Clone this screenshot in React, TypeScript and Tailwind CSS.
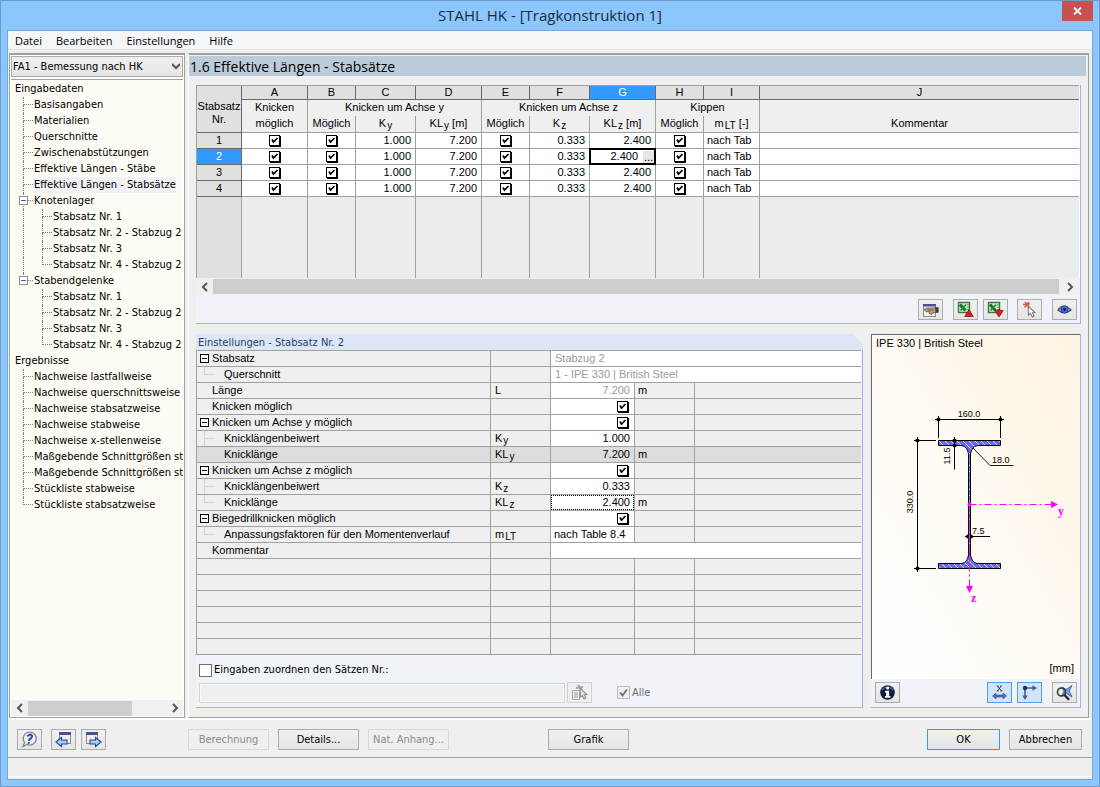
import React from "react";

const TAHOMA = "font-['DejaVu_Sans_Condensed','DejaVu_Sans',sans-serif]";
const SEGOE = "font-['Open_Sans','Noto_Sans',sans-serif]";

/* ---------- small shared pieces ---------- */

function GridCheck({ label }: { label: string }) {
  return (
    <span className="inline-grid h-[12px] w-[12px] align-top">
      <input
        type="checkbox"
        defaultChecked
        aria-label={label}
        className="peer m-0 h-[11px] w-[11px] appearance-none border border-black bg-white shadow-[1px_1px_0_#000] [grid-area:1/1]"
      />
      <svg viewBox="0 0 11 11" className="pointer-events-none invisible h-[11px] w-[11px] peer-checked:visible [grid-area:1/1]">
        <path d="M3 4.5 L4.5 7.2 L8.5 3" fill="none" stroke="#000" strokeWidth="1.7" />
      </svg>
    </span>
  );
}

function Index({ children }: { children: React.ReactNode }) {
  return <sub className="-bottom-[2px] ml-px text-[10px]">{children}</sub>;
}

function Chevron({ dir }: { dir: "left" | "right" | "down" }) {
  const d = { left: "M6 1 L2 5 L6 9", right: "M2 1 L6 5 L2 9", down: "M0 3 L4 7 L8 3" }[dir];
  return (
    <svg viewBox="0 0 8 10" className="h-[10px] w-[8px]">
      <path d={d} fill="none" stroke="#555" strokeWidth="2" />
    </svg>
  );
}

function IconButton({
  label,
  tone = "plain",
  children,
}: {
  label: string;
  tone?: "plain" | "active" | "off";
  children: React.ReactNode;
}) {
  const tones = {
    plain: "border-[#acacac] bg-linear-to-b from-[#f0f0f0] to-[#e5e5e5]",
    active: "border-[#569de5] bg-[#cfe5fb]",
    off: "border-[#d0d0d0] bg-[#efefef]",
  };
  return (
    <button
      type="button"
      aria-label={label}
      disabled={tone === "off"}
      className={`flex h-[21px] w-[25px] shrink-0 items-center justify-center border ${tones[tone]}`}
    >
      {children}
    </button>
  );
}

function PushButton({
  children,
  disabled,
  primary,
  width = "w-[81px]",
}: {
  children: React.ReactNode;
  disabled?: boolean;
  primary?: boolean;
  width?: string;
}) {
  const look = disabled
    ? "border-[#d9d9d9] bg-[#efefef] text-[#8a8a8a]"
    : primary
      ? "border-[#3399ff] bg-linear-to-b from-[#f0f0f0] to-[#e5e5e5]"
      : "border-[#acacac] bg-linear-to-b from-[#f0f0f0] to-[#e5e5e5]";
  return (
    <button type="button" disabled={disabled} className={`h-[21px] ${width} shrink-0 border pt-[2px] text-center whitespace-nowrap ${look}`}>
      {children}
    </button>
  );
}

/* ---------- icons ---------- */

const icon = "h-[17px] w-[17px]";

const ExcelIcon = ({ up }: { up: boolean }) => (
  <svg viewBox="0 0 17 17" className={icon}>
    <rect x="1.5" y="1.5" width="11" height="10" fill="#cfe6cf" stroke="#2f7d3a" strokeWidth="1.4" />
    <path d="M3 3.5 L8.5 9.5" stroke="#1a6b28" strokeWidth="2.8" />
    <path d="M9 3.5 L3.5 9.5" stroke="#2f8a3d" strokeWidth="1.8" />
    <path d="M10 3.8 H12 M10 6.2 H12 M10 8.6 H12" stroke="#57a560" />
    {up ? (
      <path d="M12 8.5 L16.3 15.5 H7.7 Z" fill="#e01b1b" stroke="#8d0a0a" strokeWidth="0.7" />
    ) : (
      <path d="M7.7 9.5 H10 Q12 7.5 14 9.5 H16.3 L12 16 Z" fill="#e01b1b" stroke="#8d0a0a" strokeWidth="0.7" />
    )}
  </svg>
);

const DialogHandIcon = () => (
  <svg viewBox="0 0 17 17" className={icon}>
    <rect x="1.5" y="3.5" width="12" height="12" fill="#f2f2f2" stroke="#8b8b8b" />
    <rect x="1" y="3" width="13" height="2.5" fill="#46538c" />
    <path d="M2 8.5 L5 7 H9 L16 6.5 V11.5 H12 L9.5 13.5 L7 12.5 L7.5 10.5 L4 10.8 Z" fill="#b9977a" stroke="#5f4a3a" strokeWidth="0.7" />
    <path d="M13 6.5 H16.5 V11.5 H13.5 Z" fill="#3a3f55" />
    <path d="M6 9 H11" stroke="#6b5444" strokeWidth="0.8" />
  </svg>
);

const PickIcon = () => (
  <svg viewBox="0 0 17 17" className={icon}>
    <path d="M2 3.5 L9 3 M3.5 6.5 L8 1 M4 1 L8 6" stroke="#d95757" strokeWidth="1.6" />
    <path d="M7 5 L7.5 14 L9.5 12.3 L11.3 16 L13 15 L11.5 11.7 L14 11.5 Z" fill="#fff" stroke="#7a7a7a" strokeWidth="1.1" />
  </svg>
);

const EyeIcon = () => (
  <svg viewBox="0 0 17 17" className={icon}>
    <path d="M2 9 Q8 2.5 15 9 Q8 14.5 2 9 Z" fill="#e8ecf7" stroke="#3a3f58" strokeWidth="1.2" />
    <path d="M2 8 Q8 1.5 15 8.5" fill="none" stroke="#6b7080" />
    <circle cx="8.5" cy="8.5" r="3.7" fill="#3d6ae0" stroke="#1b2f80" strokeWidth="0.8" />
    <circle cx="8.5" cy="8.5" r="1.4" fill="#0a0f30" />
  </svg>
);

const InfoIcon = () => (
  <svg viewBox="0 0 17 17" className={icon}>
    <circle cx="8.5" cy="8.5" r="7.3" fill="#101c40" />
    <path d="M3 6 Q8.5 -0.5 14 6" fill="none" stroke="#4a5f9a" strokeWidth="1.3" />
    <rect x="7.3" y="3" width="2.8" height="2.4" fill="#fff" />
    <path d="M6 6.8 H10.1 V12 H11.4 V13.8 H6 V12 H7.2 V8.5 H6 Z" fill="#fff" />
  </svg>
);

const DimensionXIcon = () => (
  <svg viewBox="0 0 17 17" className={icon}>
    <path d="M6.5 2 L10.5 7 M10.2 2 L6.5 7" stroke="#222" strokeWidth="0.9" />
    <path d="M5.5 2 H7.5 M9.3 2 H11 M5.5 7 H7.5 M9.3 7 H11.3" stroke="#222" strokeWidth="0.7" />
    <path d="M1.5 12 L5 9 V11 H12 V9 L15.5 12 L12 15 V13 H5 V15 Z" fill="#4a6fb8" stroke="#2f4f8c" strokeWidth="0.6" />
  </svg>
);

const AxesIcon = () => (
  <svg viewBox="0 0 17 17" className={icon}>
    <path d="M4 4 H12 M4 4 V12" stroke="#4a5f8c" strokeWidth="1.6" />
    <path d="M11.5 1.3 L16 4 L11.5 6.7 Z M1.3 11.5 L4 16 L6.7 11.5 Z" fill="#41609e" />
    <circle cx="4" cy="4" r="2.2" fill="#1f2f58" />
  </svg>
);

const ZoomResetIcon = () => (
  <svg viewBox="0 0 17 17" className={icon}>
    <path d="M6 3 L10 5.5 L16 1.5 L13.2 7 L16 13 L10.5 9.5 L5.5 12 L8 7.5 Z" fill="#7fa5ea" stroke="#2c4d96" strokeWidth="0.8" />
    <circle cx="5.5" cy="8" r="4" fill="none" stroke="#333" strokeWidth="1.6" />
    <path d="M8.3 10.8 L13 15.8" stroke="#222" strokeWidth="2.4" />
  </svg>
);

const HelpIcon = () => (
  <svg viewBox="0 0 17 17" className={icon}>
    <path d="M8.8 1.2 A6.4 6.4 0 1 1 6.2 13.4 L2 15.5 L3.6 11.5 A6.4 6.4 0 0 1 8.8 1.2 Z" fill="#eef0f4" stroke="#85888f" strokeWidth="1.3" />
    <path d="M6.3 5.4 Q8.8 2.2 10.9 4.6 Q11.6 6.4 8.5 8.4 L8 10" fill="none" stroke="#27489b" strokeWidth="1.9" />
    <circle cx="7.7" cy="12" r="1.1" fill="#27489b" />
  </svg>
);

const WindowArrowIcon = ({ back }: { back: boolean }) => (
  <svg viewBox="0 0 17 17" className={icon}>
    <rect x={back ? 4.5 : 1.5} y="1.5" width="11" height="11" fill="#ededed" stroke="#8a8a8a" />
    <rect x={back ? 4 : 1} y="1" width="12" height="3" fill="#46538c" />
    {back ? (
      <path d="M1 11 L6.5 6.5 V9 H12 V13 H6.5 V15.5 Z" fill="#a9ccfa" stroke="#23499c" strokeWidth="1.1" />
    ) : (
      <path d="M16 11 L10.5 6.5 V9 H5 V13 H10.5 V15.5 Z" fill="#a9ccfa" stroke="#23499c" strokeWidth="1.1" />
    )}
  </svg>
);

const PickListIcon = () => (
  <svg viewBox="0 0 17 17" className={icon}>
    <path d="M1.5 6.5 H8.5 V15.5 H1.5 Z" fill="#f4f4f4" stroke="#a5a5a5" />
    <path d="M3 9 H7 M3 11 H7 M3 13 H7" stroke="#999" />
    <path d="M5 4 L12 3 M7 1 L11 6" stroke="#a5a5a5" strokeWidth="2" />
    <path d="M9 4 L9.5 13 L11.3 11.5 L13 15 L14.7 14 L13.2 10.8 L15.8 10.5 Z" fill="#e6e6e6" stroke="#8c8c8c" strokeWidth="1.1" />
  </svg>
);

/* ---------- navigation tree ---------- */

type Node = { text: string; level: 0 | 1 | 2; last?: boolean; box?: boolean; trunk?: boolean; current?: boolean };

const nodes: Node[] = [
  { text: "Eingabedaten", level: 0 },
  { text: "Basisangaben", level: 1 },
  { text: "Materialien", level: 1 },
  { text: "Querschnitte", level: 1 },
  { text: "Zwischenabstützungen", level: 1 },
  { text: "Effektive Längen - Stäbe", level: 1 },
  { text: "Effektive Längen - Stabsätze", level: 1, current: true },
  { text: "Knotenlager", level: 1, box: true },
  { text: "Stabsatz Nr. 1", level: 2, trunk: true },
  { text: "Stabsatz Nr. 2 - Stabzug 2", level: 2, trunk: true },
  { text: "Stabsatz Nr. 3", level: 2, trunk: true },
  { text: "Stabsatz Nr. 4 - Stabzug 2", level: 2, trunk: true, last: true },
  { text: "Stabendgelenke", level: 1, box: true, last: true },
  { text: "Stabsatz Nr. 1", level: 2 },
  { text: "Stabsatz Nr. 2 - Stabzug 2", level: 2 },
  { text: "Stabsatz Nr. 3", level: 2 },
  { text: "Stabsatz Nr. 4 - Stabzug 2", level: 2, last: true },
  { text: "Ergebnisse", level: 0 },
  { text: "Nachweise lastfallweise", level: 1 },
  { text: "Nachweise querschnittsweise", level: 1 },
  { text: "Nachweise stabsatzweise", level: 1 },
  { text: "Nachweise stabweise", level: 1 },
  { text: "Nachweise x-stellenweise", level: 1 },
  { text: "Maßgebende Schnittgrößen sta", level: 1 },
  { text: "Maßgebende Schnittgrößen sta", level: 1 },
  { text: "Stückliste stabweise", level: 1 },
  { text: "Stückliste stabsatzweise", level: 1, last: true },
];

function TreeRow({ node }: { node: Node }) {
  return (
    <li className="flex h-4 items-center pl-[3px] whitespace-nowrap">
      {node.level === 2 && (
        <span className={`ml-[9px] h-4 w-[19px] shrink-0 border-dotted border-[#7d7d7d] ${node.trunk ? "border-l" : ""}`} />
      )}
      {node.level > 0 && (
        <span className={`relative flex w-[10px] shrink-0 flex-col ${node.level === 1 ? "ml-[9px]" : ""}`}>
          <span className="h-2 border-b border-l border-dotted border-[#7d7d7d]" />
          <span className={`h-2 border-dotted border-[#7d7d7d] ${node.last ? "" : "border-l"}`} />
          {node.box && (
            <button
              type="button"
              aria-label={`${node.text} zuklappen`}
              className="absolute top-[3px] -left-1 flex h-[9px] w-[9px] items-center justify-center border border-[#919191] bg-white"
            >
              <span className="h-px w-[5px] bg-[#3f5fae]" />
            </button>
          )}
        </span>
      )}
      <a href="#" className={`h-4 leading-4 ${node.current ? "bg-[#f1f1f4]" : ""} ${node.level > 0 ? "pl-px" : "pl-px"}`}>
        {node.text}
      </a>
    </li>
  );
}

function Sidebar() {
  return (
    <aside className="flex w-[176px] shrink-0 flex-col border border-t-2 border-[#a0a0a0] bg-white px-px pt-px">
      <div className="relative">
        <select
          aria-label="Bemessungsfall"
          className="block h-[21px] w-full appearance-none border border-[#acacac] bg-linear-to-b from-[#f0f0f0] to-[#e5e5e5] pt-[2px] pr-4 pl-px"
        >
          <option>FA1 - Bemessung nach HK</option>
        </select>
        <span className="pointer-events-none absolute top-[5px] right-[3px] flex">
          <Chevron dir="down" />
        </span>
      </div>
      <ul className="mt-[2px] flex-1 overflow-hidden border-t border-[#a0a0a0] bg-[#fcfbf4] pt-px">
        {nodes.map((n, i) => (
          <TreeRow key={i} node={n} />
        ))}
      </ul>
      <div className="mb-px flex h-[16px] items-center bg-[#f0f0f0]">
        <span className="flex w-[17px] justify-center">
          <Chevron dir="left" />
        </span>
        <span className="h-[15px] w-[104px] bg-[#cdcdcd]" />
        <span className="ml-auto flex w-[17px] justify-center">
          <Chevron dir="right" />
        </span>
      </div>
    </aside>
  );
}

/* ---------- upper grid ---------- */

const letters = ["A", "B", "C", "D", "E", "F", "G", "H", "I", "J"];
const gridRows = [1, 2, 3, 4];

function CheckCell({ label }: { label: string }) {
  return (
    <td className="h-[16px] border-r border-b border-[#a0a0a0] bg-white p-0">
      <div className="flex h-[15px] items-end justify-center pb-px">
        <GridCheck label={label} />
      </div>
    </td>
  );
}

function LengthsGrid() {
  const sub = "border-r border-b border-[#a0a0a0] h-[17px] p-0 pb-[2px] font-normal";
  const group = "border-r border-[#a0a0a0] h-[16px] p-0 pb-[2px] font-normal";
  const cell = "border-r border-b border-[#a0a0a0] bg-white h-[16px] p-0 leading-[15px]";
  return (
    <section className="flex flex-col border-r border-b border-[#aaaaee] bg-[#f0f4f9]">
      <div className="bg-white pr-px">
        <table className="w-full table-fixed border-separate border-spacing-0 border-t border-l border-[#a0a0a0] bg-[#efefef] text-center font-['Liberation_Sans',Arial,sans-serif] leading-[13px]">
          <colgroup>
            <col className="w-[45px]" />
            <col className="w-[66px]" />
            <col className="w-[48px]" />
            <col className="w-[60px]" />
            <col className="w-[66px]" />
            <col className="w-[48px]" />
            <col className="w-[60px]" />
            <col className="w-[66px]" />
            <col className="w-[48px]" />
            <col className="w-[56px]" />
            <col />
          </colgroup>
          <thead>
            <tr>
              <th rowSpan={3} className="border-r border-b border-[#696969] bg-[#e0e0e0] p-0 pt-[14px] align-top font-normal">
                Stabsatz
                <br />
                Nr.
              </th>
              {letters.map((l) => (
                <th
                  key={l}
                  className={`h-[14px] border-r border-b border-[#696969] p-0 font-normal ${
                    l === "G" ? "bg-[#3399ff] text-white" : "bg-[#e0e0e0]"
                  } ${l === "J" ? "border-r-0" : ""}`}
                >
                  {l}
                </th>
              ))}
            </tr>
            <tr>
              <th className={group}>Knicken</th>
              <th className={group} colSpan={3}>
                Knicken um Achse y
              </th>
              <th className={group} colSpan={3}>
                Knicken um Achse z
              </th>
              <th className={group} colSpan={2}>
                Kippen
              </th>
              <th className="p-0" />
            </tr>
            <tr>
              <th className={sub}>möglich</th>
              <th className={sub}>Möglich</th>
              <th className={sub}>
                K<Index>y</Index>
              </th>
              <th className={sub}>
                KL<Index>y</Index> [m]
              </th>
              <th className={sub}>Möglich</th>
              <th className={sub}>
                K<Index>z</Index>
              </th>
              <th className={sub}>
                KL<Index>z</Index> [m]
              </th>
              <th className={sub}>Möglich</th>
              <th className={sub}>
                m<Index>LT</Index> [-]
              </th>
              <th className="border-b border-[#a0a0a0] p-0 pb-[2px] font-normal">Kommentar</th>
            </tr>
          </thead>
          <tbody>
            {gridRows.map((n) => (
              <tr key={n}>
                <th
                  className={`h-[16px] border-r border-b border-[#696969] p-0 leading-[15px] font-normal ${
                    n === 2 ? "bg-[#3399ff] text-white" : "bg-[#e0e0e0]"
                  }`}
                >
                  {n}
                </th>
                <CheckCell label={`Knicken möglich ${n}`} />
                <CheckCell label={`Knicken um y möglich ${n}`} />
                <td className={`${cell} pr-1 text-right`}>1.000</td>
                <td className={`${cell} pr-1 text-right`}>7.200</td>
                <CheckCell label={`Knicken um z möglich ${n}`} />
                <td className={`${cell} pr-1 text-right`}>0.333</td>
                {n === 2 ? (
                  <td className={cell}>
                    <div className="flex h-[15px] items-center justify-end outline-2 -outline-offset-1 outline-black">
                      2.400
                      <button type="button" aria-label="Wert auswählen" className="mr-px ml-[5px] h-[12px] w-[11px] bg-[#e4e4e4] leading-[8px]">
                        ...
                      </button>
                    </div>
                  </td>
                ) : (
                  <td className={`${cell} pr-1 text-right`}>2.400</td>
                )}
                <CheckCell label={`Kippen möglich ${n}`} />
                <td className={`${cell} pl-[3px] text-left`}>nach Tab</td>
                <td className={`${cell} border-r-0`} />
              </tr>
            ))}
            <tr>
              <td className="h-[81px] border-r border-[#a0a0a0] bg-[#e0e0e0]" />
              {letters.map((l) => (
                <td key={l} className={`bg-[#e9edee] ${l === "J" ? "" : "border-r border-[#a0a0a0]"}`} />
              ))}
            </tr>
          </tbody>
        </table>
      </div>
      <div className="flex h-[17px] items-center bg-[#f0f0f0]">
        <span className="flex w-[17px] justify-center">
          <Chevron dir="left" />
        </span>
        <span className="h-[15px] flex-1 bg-[#cdcdcd]" />
        <span className="flex w-[21px] justify-center">
          <Chevron dir="right" />
        </span>
      </div>
      <div className="flex h-[28px] items-center justify-end pr-[3px]">
        <IconButton label="Dialog bearbeiten">
          <DialogHandIcon />
        </IconButton>
        <span className="w-[10px]" />
        <IconButton label="Excel-Export">
          <ExcelIcon up />
        </IconButton>
        <span className="w-[5px]" />
        <IconButton label="Excel-Import">
          <ExcelIcon up={false} />
        </IconButton>
        <span className="w-[9px]" />
        <IconButton label="Stabsatz wählen">
          <PickIcon />
        </IconButton>
        <span className="w-[10px]" />
        <IconButton label="Ansicht">
          <EyeIcon />
        </IconButton>
      </div>
    </section>
  );
}

/* ---------- settings grid ---------- */

type Setting = {
  text: string;
  box?: boolean;
  child?: "mid" | "end";
  base?: string;
  index?: string;
  value?: string;
  check?: boolean;
  unit?: string;
  muted?: boolean;
  wide?: boolean;
  shaded?: boolean;
  focus?: boolean;
  left?: boolean;
};

const settings: Setting[] = [
  { text: "Stabsatz", box: true, value: "Stabzug 2", wide: true, muted: true },
  { text: "Querschnitt", child: "end", value: "1 - IPE 330 | British Steel", wide: true, muted: true },
  { text: "Länge", base: "L", value: "7.200", unit: "m", muted: true },
  { text: "Knicken möglich", check: true },
  { text: "Knicken um Achse y möglich", box: true, check: true },
  { text: "Knicklängenbeiwert", child: "mid", base: "K", index: "y", value: "1.000" },
  { text: "Knicklänge", child: "end", base: "KL", index: "y", value: "7.200", unit: "m", shaded: true },
  { text: "Knicken um Achse z möglich", box: true, check: true },
  { text: "Knicklängenbeiwert", child: "mid", base: "K", index: "z", value: "0.333" },
  { text: "Knicklänge", child: "end", base: "KL", index: "z", value: "2.400", unit: "m", focus: true },
  { text: "Biegedrillknicken möglich", box: true, check: true },
  { text: "Anpassungsfaktoren für den Momentenverlauf", child: "end", base: "m", index: "LT", value: "nach Table 8.4", left: true },
  { text: "Kommentar", wide: true },
];

function SettingsPanel() {
  const line = "border-r border-b border-[#a0a0a0] h-[16px] p-0";
  const edge = "border-b border-[#a0a0a0] h-[16px] p-0";
  return (
    <section className="flex min-w-0 flex-1 flex-col">
      <h2 className="h-[16px] bg-[#dce6f4] pt-px pl-[2px] leading-[15px] text-[#1f3f6f] [clip-path:polygon(0_0,calc(100%-10px)_0,100%_10px,100%_100%,0_100%)]">
        Einstellungen - Stabsatz Nr. 2
      </h2>
      <div className="flex flex-1 flex-col border-r border-b border-[#aaaaee] bg-[#f0f4f9]">
        <div className="pr-px">
          <table className="w-full table-fixed border-separate border-spacing-0 border-t border-l border-[#a0a0a0] bg-[#efefef] font-['Liberation_Sans',Arial,sans-serif] leading-[15px]">
            <colgroup>
              <col />
              <col className="w-[60px]" />
              <col className="w-[84px]" />
              <col className="w-[60px]" />
              <col className="w-[166px]" />
            </colgroup>
            <tbody>
              {settings.map((s, i) => (
                <tr key={i} className={s.shaded ? "bg-[#dcdcdc]" : ""}>
                  <th className={`${line} text-left font-normal`}>
                    <div className="flex h-[15px] items-center">
                      {s.box ? (
                        <button
                          type="button"
                          aria-label={`${s.text} zuklappen`}
                          className="mr-[3px] ml-[3px] flex h-[9px] w-[9px] items-center justify-center border border-black bg-white"
                        >
                          <span className="h-px w-[5px] bg-black" />
                        </button>
                      ) : s.child ? (
                        <span className="mr-[9px] ml-[7px] flex h-[15px] w-[11px] flex-col">
                          <span className={`h-2 ${s.shaded ? "" : "border-b border-l border-[#d2d2d2]"}`} />
                          <span className={`h-[7px] border-[#d2d2d2] ${s.child === "mid" ? "border-l" : ""}`} />
                        </span>
                      ) : (
                        <span className="w-[15px]" />
                      )}
                      {s.text}
                    </div>
                  </th>
                  <td className={`${line} pl-1`}>
                    {s.base}
                    {s.index && <Index>{s.index}</Index>}
                  </td>
                  {s.wide ? (
                    <td colSpan={3} className={`${edge} bg-white pl-1 text-[#9a9a9a]`}>
                      {s.value}
                    </td>
                  ) : (
                    <>
                      <td className={`${line} ${s.shaded ? "" : "bg-white"} ${s.muted ? "text-[#9a9a9a]" : ""}`}>
                        <div
                          className={`flex h-[15px] items-center ${s.left ? "pl-[3px]" : s.check ? "justify-end pr-[5px]" : "justify-end pr-1"} ${
                            s.focus ? "outline-1 -outline-offset-1 outline-black outline-dotted" : ""
                          }`}
                        >
                          {s.check ? <GridCheck label={s.text} /> : s.value}
                        </div>
                      </td>
                      <td className={`${line} pl-[3px]`}>{s.unit}</td>
                      <td className={edge} />
                    </>
                  )}
                </tr>
              ))}
              {[0, 1, 2, 3, 4, 5].map((i) => (
                <tr key={i}>
                  <td className={line} />
                  <td className={line} />
                  <td className={line} />
                  <td className={line} />
                  <td className={edge} />
                </tr>
              ))}
            </tbody>
          </table>
        </div>
        <div className="flex flex-1 flex-col gap-[5px] pt-[9px] pb-[4px] pl-[3px]">
          <label className="flex h-[13px] items-center gap-[2px]">
            <input type="checkbox" className="m-0 h-[13px] w-[13px] appearance-none border border-[#707070] bg-white" />
            Eingaben zuordnen den Sätzen Nr.:
          </label>
          <div className="flex items-center">
            <input
              type="text"
              disabled
              aria-label="Sätze Nr."
              className="h-[20px] min-w-0 flex-1 border border-[#d0d3d8] bg-[#efefef] px-1 shadow-[inset_0_0_0_1px_#fafafa]"
            />
            <span className="w-[2px]" />
            <IconButton label="Sätze wählen" tone="off">
              <PickListIcon />
            </IconButton>
            <label className="ml-[25px] flex w-[245px] items-center gap-[2px] text-[#6d6d6d]">
              <span className="grid">
                <input
                  type="checkbox"
                  defaultChecked
                  disabled
                  className="m-0 h-[13px] w-[13px] appearance-none border border-[#bcbcbc] bg-[#efefef] [grid-area:1/1]"
                />
                <svg viewBox="0 0 13 13" className="pointer-events-none h-[13px] w-[13px] [grid-area:1/1]">
                  <path d="M3 6.5 L5.5 9.5 L10 3.5" fill="none" stroke="#6d6d6d" strokeWidth="1.8" />
                </svg>
              </span>
              <span className="pt-px">Alle</span>
            </label>
          </div>
        </div>
      </div>
    </section>
  );
}

/* ---------- section drawing ---------- */

const profile =
  "M938.5 440.5 H1000.5 V445.5 H977 Q971.5 447 970.5 454 V555 Q971.5 562 977 563.5 H1000.5 V568.5 H938.5 V563.5 H962 Q967.5 562 968.5 555 V454 Q967.5 447 962 445.5 H938.5 Z";

const ticks = [
  [938.5, 419.5],
  [1000.5, 419.5],
  [917.5, 440.5],
  [917.5, 568.5],
  [954.5, 440.5],
  [954.5, 445.5],
  [968, 536.5],
  [971, 536.5],
];

function SectionDrawing() {
  return (
    <svg viewBox="872 352 208 309" className="min-h-0 w-full flex-1" role="img" aria-label="Querschnitt IPE 330">
      <defs>
        <pattern id="hatch" width="6" height="6" patternUnits="userSpaceOnUse">
          <rect width="6" height="6" fill="#6666f8" />
          <path d="M-1 -1 L7 7 M-1 5 L1 7 M5 -1 L7 1" stroke="#d6d6ff" strokeWidth="1" />
        </pattern>
      </defs>
      <path d={profile} fill="url(#hatch)" stroke="#000" />
      <g stroke="#000" fill="none">
        <path d="M935 419.5 H1004 M938.5 416 V438 M1000.5 416 V438" />
        <path d="M917.5 437 V572 M914 440.5 H936 M914 568.5 H936" />
        <path d="M954.5 437 V469.5" />
        <path d="M965 536.5 H990" />
        <path d="M973 448 L990 465.5 H1013.5" strokeWidth="0.9" />
      </g>
      {ticks.map(([x, y]) => (
        <circle key={`${x}-${y}`} cx={x} cy={y} r="2" />
      ))}
      <g stroke="#f0f" fill="none">
        <path d="M969.5 504.5 H1051" strokeDasharray="7 3 2 3" />
        <path d="M969.5 504.5 V587" strokeDasharray="7 3 2 3" />
      </g>
      <path d="M1051 501 L1058 504.5 L1051 508 Z M966 586 H973 L969.5 593 Z" fill="#f0f" />
      <circle cx="969.5" cy="504.5" r="2" fill="#f0f" />
      <g className="font-['Liberation_Sans',Arial,sans-serif] text-[9px]">
        <text x="969" y="417" textAnchor="middle">160.0</text>
        <text x="992" y="463">18.0</text>
        <text x="972" y="534">7.5</text>
        <text transform="translate(913 502) rotate(-90)" textAnchor="middle">330.0</text>
        <text transform="translate(950 456) rotate(-90)" textAnchor="middle">11.5</text>
      </g>
      <g fill="#f0f" className="font-['Liberation_Serif',serif] text-[12px] font-bold">
        <text x="1058" y="515">y</text>
        <text x="971" y="602">z</text>
      </g>
    </svg>
  );
}

function SectionPanel() {
  return (
    <section className="flex w-[210px] shrink-0 flex-col border-r border-b border-[#aaaaee] bg-[#f0f4f9]">
      <div className="flex flex-1 flex-col border-t border-l border-[#696969] bg-linear-to-bl from-[#fcf4e0] via-[#fffaf2] to-white font-['Liberation_Sans',Arial,sans-serif]">
        <div className="h-[17px] pl-1 leading-[17px]">IPE 330 | British Steel</div>
        <SectionDrawing />
        <div className="h-[18px] pr-[6px] text-right leading-[15px]">[mm]</div>
      </div>
      <div className="flex h-[28px] items-center pr-[3px] pb-px pl-1">
        <IconButton label="Info">
          <InfoIcon />
        </IconButton>
        <span className="flex-1" />
        <IconButton label="Bemaßung" tone="active">
          <DimensionXIcon />
        </IconButton>
        <span className="w-[5px]" />
        <IconButton label="Achsen" tone="active">
          <AxesIcon />
        </IconButton>
        <span className="w-[10px]" />
        <IconButton label="Ansicht zurücksetzen">
          <ZoomResetIcon />
        </IconButton>
      </div>
    </section>
  );
}

/* ---------- window ---------- */

export default function App() {
  return (
    <div className={`flex min-h-screen flex-col border border-[#6c9bc7] bg-[#8cc6fe] px-[6px] pb-[6px] text-[11px] text-black ${TAHOMA}`}>
      <header className={`flex h-[29px] items-start ${SEGOE}`}>
        <span className="w-[31px]" />
        <h1 className="flex-1 text-center text-[15px] leading-[29px] text-[#1b2a3a]">STAHL HK - [Tragkonstruktion 1]</h1>
        <button type="button" aria-label="Schließen" className="flex h-[20px] w-[31px] items-center justify-center bg-[#c75050]">
          <svg viewBox="0 0 9 8" className="h-[8px] w-[9px]">
            <path d="M1 0.5 L8 7.5 M8 0.5 L1 7.5" stroke="#fff" strokeWidth="1.8" />
          </svg>
        </button>
      </header>

      <div className="flex flex-1 flex-col border border-[#76a7d6] bg-[#efefef]">
        <nav className={`flex h-[19px] items-center gap-[14px] border-b border-[#e6e6e6] bg-[#f5f6f7] pt-[2px] pl-[7px] text-[11px] ${SEGOE}`}>
          <button type="button">Datei</button>
          <button type="button">Bearbeiten</button>
          <button type="button">Einstellungen</button>
          <button type="button">Hilfe</button>
        </nav>

        <div className="flex flex-1 gap-[3px] border-b border-white pt-[3px] pr-[3px] pl-px">
          <Sidebar />
          <main className="flex min-w-0 flex-1 flex-col border border-t-2 border-[#a0a0a0] border-l-white pt-px">
            <h2 className={`mr-[2px] h-[20px] bg-[#bccbd9] pl-px text-[14px] leading-[22px] ${SEGOE}`}>1.6 Effektive Längen - Stabsätze</h2>
            <div className="flex flex-1 flex-col gap-[10px] px-[7px] pt-[9px] pb-[9px]">
              <LengthsGrid />
              <div className="flex flex-1 gap-2">
                <SettingsPanel />
                <SectionPanel />
              </div>
            </div>
          </main>
        </div>

        <footer>
          <div className="flex h-[38px] items-center border-t border-white px-[9px] pt-[2px]">
            <IconButton label="Hilfe">
              <HelpIcon />
            </IconButton>
            <span className="w-[9px]" />
            <IconButton label="Zurück">
              <WindowArrowIcon back />
            </IconButton>
            <span className="w-[5px]" />
            <IconButton label="Weiter">
              <WindowArrowIcon back={false} />
            </IconButton>
            <div className="ml-[82px] flex gap-[9px]">
              <PushButton disabled>Berechnung</PushButton>
              <PushButton>Details...</PushButton>
              <PushButton disabled>Nat. Anhang...</PushButton>
            </div>
            <div className="ml-[99px]">
              <PushButton>Grafik</PushButton>
            </div>
            <div className="ml-auto flex gap-[9px] pr-px">
              <PushButton primary width="w-[73px]">
                OK
              </PushButton>
              <PushButton width="w-[73px]">Abbrechen</PushButton>
            </div>
          </div>
          <div className="flex h-[22px] flex-col border-t border-[#a0a0a0]">
            <span className="mt-[18px] h-px bg-white" />
          </div>
        </footer>
      </div>
    </div>
  );
}
